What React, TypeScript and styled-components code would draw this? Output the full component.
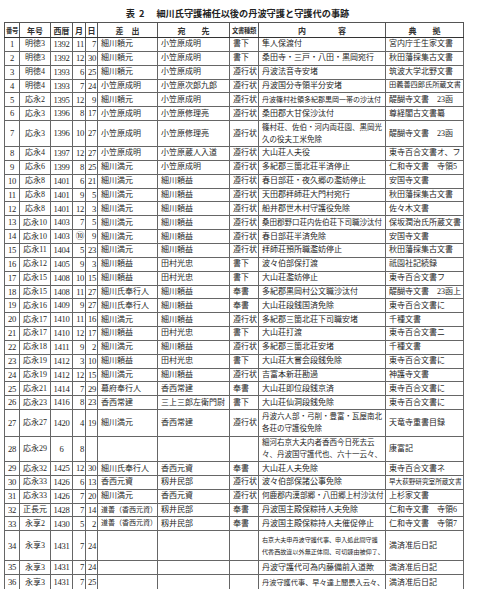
import React from 'react'
import styled, { createGlobalStyle } from 'styled-components'

const GlobalStyle = createGlobalStyle`
    body {
        margin: 0;
        background: #fff;
    }
`;

type Align = 'left' | 'center' | 'right';

interface RowData {
    n: string;
    era: string;
    year: string;
    m: string;
    d: string;
    from: string;
    to: string;
    kind: string;
    body: string[];
    src: string;
    h?: number;
    small?: number;
    srcSmall?: number;
    fromSmall?: number;
}

const r = (
    n: string, era: string, year: string, m: string, d: string,
    from: string, to: string, kind: string, body: string | string[], src: string,
    extra: Partial<RowData> = {}
): RowData => ({
    n, era, year, m, d, from, to, kind,
    body: Array.isArray(body) ? body : [body],
    src, ...extra,
});

const rows: RowData[] = [
    r('1', '明徳3', '1392', '11', '7', '細川頼元', '小笠原成明', '書下', '隼人保渡付', '宮内庁壬生家文書'),
    r('2', '明徳3', '1392', '12', '30', '細川頼元', '小笠原成明', '書下', '桑田寺・三戸・八田・黒岡宛行', '秋田藩採集古文書'),
    r('3', '明徳4', '1393', '6', '25', '細川頼元', '小笠原成明', '遵行状', '丹波法音寺安堵', '筑波大学北野文書'),
    r('4', '明徳4', '1393', '7', '24', '小笠原成明', '小笠原次郎九郎', '遵行状', '丹波国分寺領半分安堵', '田義善四郎氏所蔵文書', { srcSmall: 7.2 }),
    r('5', '応永2', '1395', '12', '9', '細川頼元', '小笠原成明', '遵行状', '丹波篠村社領多紀郡黒岡一帯の沙汰付', '醍醐寺文書　23函', { small: 7 }),
    r('6', '応永3', '1396', '8', '17', '小笠原成明', '小笠原修理亮', '遵行状', '桑田郡大甘保沙汰付', '尊経閣古文書纂'),
    r('7', '応永3', '1396', '10', '27', '小笠原成明', '小笠原修理亮', '遵行状', ['篠村荘、佐伯・河内両荘園、黒岡光', '久の役夫工米免除'], '醍醐寺文書　23函', { h: 26, small: 7.5 }),
    r('8', '応永4', '1397', '12', '27', '小笠原成明', '小笠原蔵人入道', '遵行状', '大山荘人夫役', '東寺百合文書オ、フ'),
    r('9', '応永6', '1399', '8', '25', '細川満元', '小笠原成明', '遵行状', '多紀郡三箇北荘半済停止', '仁和寺文書　寺領5'),
    r('10', '応永8', '1401', '6', '21', '細川満元', '細川頼益', '遵行状', '春日部荘・夜久郷の濫妨停止', '安国寺文書'),
    r('11', '応永8', '1401', '9', '5', '細川満元', '細川頼益', '遵行状', '天田郡拝師荘大門村宛行', '秋田藩採集古文書'),
    r('12', '応永8', '1401', '12', '3', '細川満元', '細川頼益', '遵行状', '船井郡世木村守護役免除', '佐々木文書'),
    r('13', '応永10', '1403', '7', '5', '細川満元', '細川頼益', '遵行状', '桑田郡野口荘内佐伯荘下司職沙汰付', '保坂潤治氏所蔵文書', { small: 7.5 }),
    r('14', '応永10', '1403', '⑩', '9', '細川満元', '細川頼益', '遵行状', '春日部荘半済免除', '安国寺文書'),
    r('15', '応永11', '1404', '5', '23', '細川満元', '細川頼益', '遵行状', '拝師荘預所職濫妨停止', '秋田藩採集古文書'),
    r('16', '応永12', '1405', '9', '3', '細川頼益', '田村光忠', '書下', '波々伯部保打渡', '祇園社記続録'),
    r('17', '応永15', '1408', '10', '15', '細川頼益', '田村光忠', '書下', '大山荘濫妨停止', '東寺百合文書フ'),
    r('18', '応永15', '1408', '11', '27', '細川氏奉行人', '細川頼益', '奉書', '多紀郡黒岡村公文職沙汰付', '醍醐寺文書　23函上'),
    r('19', '応永16', '1409', '9', '27', '細川氏奉行人', '細川頼益', '奉書', '大山荘段銭国済免除', '東寺百合文書に'),
    r('20', '応永17', '1410', '11', '16', '細川満元', '細川頼益', '遵行状', '多紀郡三箇北荘下司職安堵', '千種文書'),
    r('21', '応永17', '1410', '12', '17', '細川頼益', '田村光忠', '書下', '大山荘打渡', '東寺百合文書ニ'),
    r('22', '応永18', '1411', '9', '2', '細川満元', '細川頼益', '遵行状', '多紀郡三箇北荘安堵', '千種文書'),
    r('23', '応永19', '1412', '3', '10', '細川頼益', '田村光忠', '書下', '大山荘大嘗会段銭免除', '東寺百合文書に'),
    r('24', '応永19', '1412', '12', '15', '細川満元', '細川頼益', '遵行状', '吉富本新荘勘過', '神護寺文書'),
    r('25', '応永21', '1414', '7', '29', '幕府奉行人', '香西常建', '奉書', '大山荘即位段銭京済', '東寺百合文書に'),
    r('26', '応永23', '1416', '8', '23', '香西常建', '三上三郎左衛門尉', '書下', '大山荘仙洞段銭免除', '東寺百合文書に'),
    r('27', '応永27', '1420', '4', '19', '細川満元', '香西常建', '遵行状', ['丹波六人部・弓削・豊富・瓦屋南北', '各荘の守護役免除'], '天竜寺重書目録', { h: 27, small: 7.5 }),
    r('28', '応永29', '6', '8', '', '', '', '', ['細河右京大夫内者香西今日死去云', '々、丹波国守護代也、六十一云々、'], '康富記', { h: 24, small: 7.5 }),
    r('29', '応永32', '1425', '12', '30', '細川氏奉行人', '香西元資', '奉書', '大山荘人夫免除', '東寺百合文書ネ'),
    r('30', '応永33', '1426', '6', '13', '香西元資', '籾井民部', '遵行状', '波々伯部保諸公事免除', '早大荻野研究室所蔵文書', { srcSmall: 6.6 }),
    r('31', '応永33', '1426', '7', '20', '細川満元', '香西元資', '遵行状', '何鹿郡内漢部郷・八田郷上村沙汰付', '上杉家文書', { small: 7.6 }),
    r('32', '正長元', '1428', '7', '14', '道善（香西元資）', '籾井民部', '奉書', '丹波国主殿保粽持人夫免除', '仁和寺文書　寺領6', { fromSmall: 7 }),
    r('33', '永享2', '1430', '5', '2', '道善（香西元資）', '籾井民部', '奉書', '丹波国主殿保粽持人夫催促停止', '仁和寺文書　寺領7', { fromSmall: 7 }),
    r('34', '永享3', '1431', '7', '24', '', '', '', ['右京大夫申丹波守護代事、申入処此間守護', '代香西故違以外無正体間、可切諌由被仰了、'], '満済准后日記', { h: 30, small: 6.1 }),
    r('35', '永享3', '1431', '7', '24', '', '', '', '丹波守護代可為内藤備前入道歟', '満済准后日記'),
    r('36', '永享3', '1431', '7', '25', '', '', '', '丹波守護代事、早々達上聞畏入云々、', '満済准后日記', { small: 7.2, h: 16 }),
];

const colWidths = [15, 31, 22, 13, 12, 60, 72, 29, 127, 78];

const App = () => {
    return (
        <>
            <GlobalStyle />
            <Page>
                <Title>
                    <TitleNum>表 2</TitleNum>
                    細川氏守護補任以後の丹波守護と守護代の事跡
                </Title>
                <Table>
                    <colgroup>
                        {colWidths.map((w, i) => <col key={i} style={{ width: w }} />)}
                    </colgroup>
                    <thead>
                        <tr>
                            <HeadCell narrow>番号</HeadCell>
                            <HeadCell>年号</HeadCell>
                            <HeadCell>西暦</HeadCell>
                            <HeadCell>月</HeadCell>
                            <HeadCell>日</HeadCell>
                            <HeadCell>差　出</HeadCell>
                            <HeadCell>宛　　先</HeadCell>
                            <HeadCell narrow>文書種類</HeadCell>
                            <HeadCell>内　　　　容</HeadCell>
                            <HeadCell>典　　拠</HeadCell>
                        </tr>
                    </thead>
                    <tbody>
                        {rows.map((row) => (
                            <Row key={row.n} h={row.h ?? 13.85}>
                                <Cell align="center" num>{row.n}</Cell>
                                <Cell align="center">{row.era}</Cell>
                                <Cell align="center" num>{row.year}</Cell>
                                <Cell align="right" num>{row.m}</Cell>
                                <Cell align="right" num>{row.d}</Cell>
                                <Cell size={row.fromSmall}>{row.from}</Cell>
                                <Cell>{row.to}</Cell>
                                <Cell>{row.kind}</Cell>
                                <Cell size={row.small}>
                                    {row.body.map((line, i) => <Line key={i}>{line}</Line>)}
                                </Cell>
                                <Cell size={row.srcSmall}>{row.src}</Cell>
                            </Row>
                        ))}
                    </tbody>
                </Table>
            </Page>
        </>
    )
}
export default App;

const Page = styled.div`
    width: 480px;
    height: 589px;
    overflow: hidden;
    padding: 4px 0 0 4px;
    box-sizing: border-box;
    font-family: "Liberation Serif", "Noto Sans CJK JP", serif;
    color: #262626;
`;

const Title = styled.div`
    width: 459px;
    height: 18px;
    display: flex;
    align-items: center;
    justify-content: center;
    gap: 11px;
    font-family: "Noto Sans CJK JP", sans-serif;
    font-weight: 700;
    font-size: 9.2px;
    color: #222;
    padding-left: 8px;
    box-sizing: border-box;
`;

const TitleNum = styled.span`
    letter-spacing: 1px;
`;

const Table = styled.table`
    width: 459px;
    table-layout: fixed;
    border-collapse: collapse;
    border: 1.6px solid #333;
`;

interface HeadCellProps {
    narrow?: boolean;
}
const HeadCell = styled.th<HeadCellProps>`
    height: 14px;
    padding: 0;
    border: 1px solid #555;
    border-bottom: 1.4px solid #333;
    font-family: "Noto Sans CJK JP", sans-serif;
    font-weight: 700;
    font-size: ${({ narrow }) => narrow ? '6.4px' : '8px'};
    letter-spacing: ${({ narrow }) => narrow ? '-0.4px' : '0'};
    white-space: nowrap;
    overflow: hidden;
    text-align: center;
    color: #333;
`;

interface RowProps {
    h: number;
}
const Row = styled.tr<RowProps>`
    height: ${({ h }) => h}px;
`;

interface CellProps {
    align?: Align;
    num?: boolean;
    size?: number;
}
const Cell = styled.td<CellProps>`
    padding: 0 ${({ align }) => align === 'right' ? '1px' : '0'} 0 ${({ align }) => !align || align === 'left' ? '3px' : '0'};
    border: 1px solid #666;
    text-align: ${({ align }) => align ?? 'left'};
    vertical-align: middle;
    white-space: nowrap;
    overflow: hidden;
    font-size: ${({ size, num }) => size ? `${size}px` : num ? '8.6px' : '8px'};
    letter-spacing: ${({ num }) => num ? '-0.3px' : '0'};
    line-height: 1;
`;

const Line = styled.div`
    line-height: 12px;
`;
